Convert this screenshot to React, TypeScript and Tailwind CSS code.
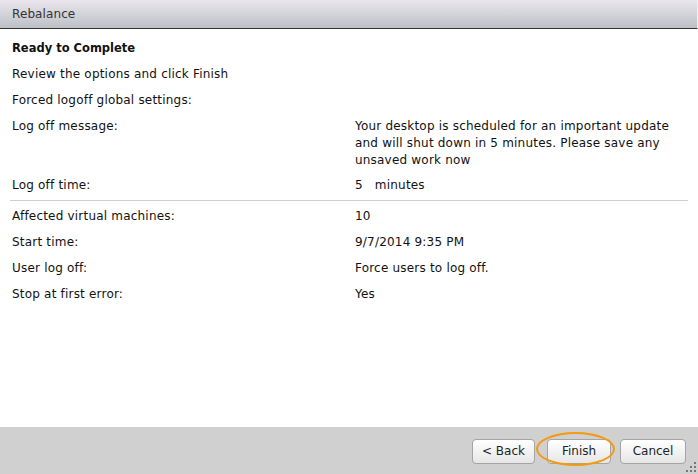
import React from "react";

const Row = ({ label, children }: { label: string; children: React.ReactNode }) => (
  <div className="flex">
    <div className="w-[343px] shrink-0">{label}</div>
    <div className="flex-1">{children}</div>
  </div>
);

export default function App() {
  return (
    <div
      className="w-[698px] h-[474px] flex flex-col bg-white text-[12px] tracking-[0.2px] leading-[17px] text-[#111] overflow-hidden"
      style={{ fontFamily: '"DejaVu Sans", Verdana, sans-serif' }}
    >
      <div className="h-[29px] shrink-0 flex items-center pl-[12px] bg-gradient-to-b from-[#e9e7ed] to-[#bebfc7] border-b border-[#333] border-r border-r-[#f0f0f0] text-[#333] text-[12px] tracking-[0.1px]">
        Rebalance
      </div>
      <div className="flex-1 flex flex-col pt-[11px] pl-[12px] pr-[10px]">
        <div className="font-bold text-[11.5px] tracking-normal">Ready to Complete</div>
        <div className="mt-[9px]">Review the options and click Finish</div>
        <div className="mt-[9px]">Forced logoff global settings:</div>
        <div className="mt-[9px]">
          <Row label="Log off message:">
            <span className="block">Your desktop is scheduled for an important update</span>
            <span className="block">and will shut down in 5 minutes. Please save any</span>
            <span className="block">unsaved work now</span>
          </Row>
        </div>
        <div className="mt-[8px]">
          <Row label="Log off time:">
            <span>5</span>
            <span className="ml-[12px]">minutes</span>
          </Row>
        </div>
        <div className="mt-[6px] -ml-[2px] h-px bg-[#cfcfcf]" />
        <div className="mt-[7px] flex flex-col gap-[9px]">
          <Row label="Affected virtual machines:">10</Row>
          <Row label="Start time:">9/7/2014 9:35 PM</Row>
          <Row label="User log off:">Force users to log off.</Row>
          <Row label="Stop at first error:">Yes</Row>
        </div>
      </div>
      <div className="relative h-[47px] shrink-0 bg-[#d0d0d0] flex items-start justify-end pt-[12px] pr-[12px]">
        <button className="w-[63px] h-[25px] rounded-[4px] border border-[#a4a4a4] bg-gradient-to-b from-white to-[#e6e6e6] text-[#1a2626] text-[12px] tracking-normal">
          &lt; Back
        </button>
        <button className="ml-[12px] w-[64px] h-[25px] rounded-[4px] border border-[#a4a4a4] bg-gradient-to-b from-white to-[#e6e6e6] text-[#1a2626] text-[12px] tracking-normal">
          Finish
        </button>
        <button className="ml-[9px] w-[66px] h-[25px] rounded-[4px] border border-[#a4a4a4] bg-gradient-to-b from-white to-[#e6e6e6] text-[#1a2626] text-[12px] tracking-normal">
          Cancel
        </button>
        <div className="absolute left-[536px] top-[5px] w-[79px] h-[34px] rounded-[50%] border-2 border-[#f39a12] pointer-events-none" />
        <svg className="absolute right-[1px] bottom-[1px]" width="11" height="11" viewBox="0 0 11 11">
          <rect x="8" y="0" width="2" height="2" fill="#777" />
          <rect x="4" y="4" width="2" height="2" fill="#777" />
          <rect x="8" y="4" width="2" height="2" fill="#777" />
          <rect x="0" y="8" width="2" height="2" fill="#777" />
          <rect x="4" y="8" width="2" height="2" fill="#777" />
          <rect x="8" y="8" width="2" height="2" fill="#777" />
        </svg>
      </div>
    </div>
  );
}
